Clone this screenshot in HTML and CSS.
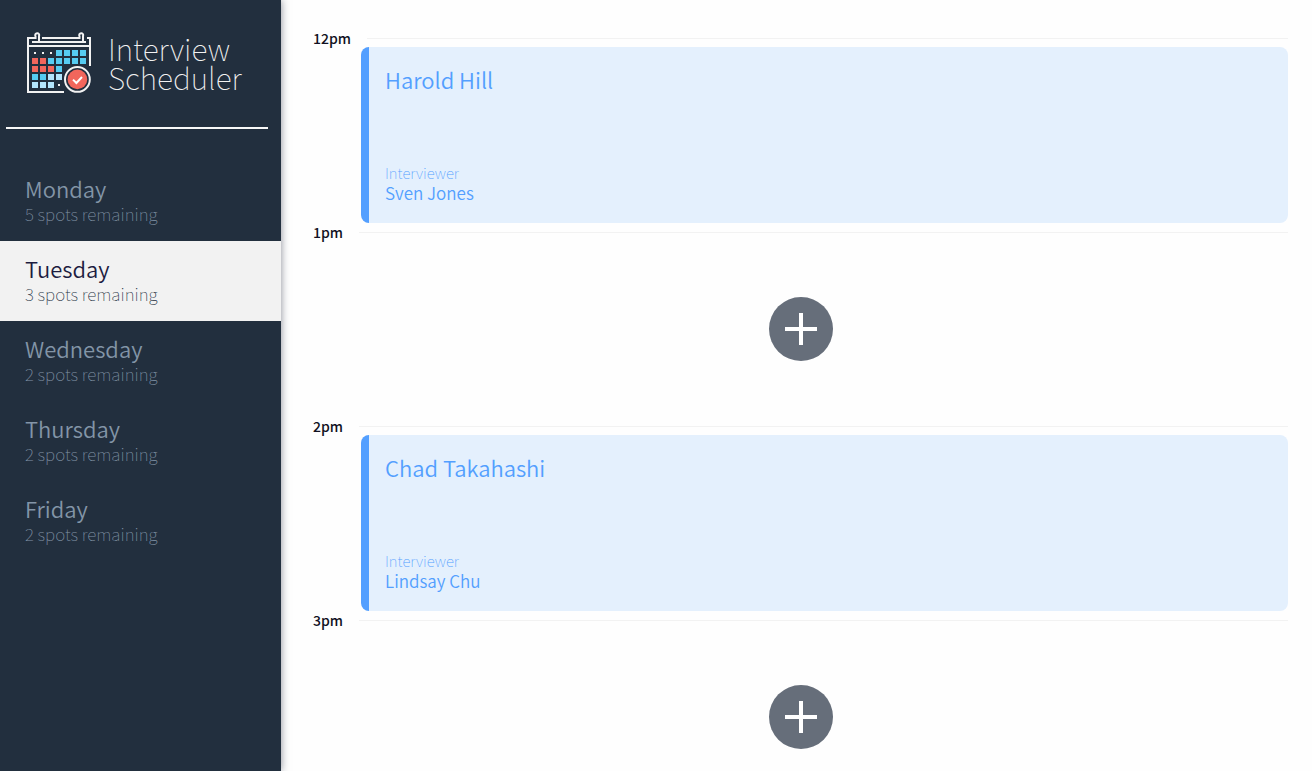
FILE: index.html
```html
<!DOCTYPE html>
<html lang="en">
<head>
<meta charset="utf-8">
<meta name="viewport" content="width=device-width, initial-scale=1">
<title>Interview Scheduler</title>
<link rel="stylesheet" href="styles.css">
</head>
<body>
<div class="layout">
  <aside class="sidebar">
    <header class="brand">
      <svg class="brand-icon" width="66" height="62" viewBox="0 0 66 62" aria-hidden="true">
        <g fill="none" stroke="#f2f2f2" stroke-width="2">
          <path d="M38 60H2V6H10M16 6H53M61 6H64V34M1 14H65M6 10H60"/>
          <path d="M9.500 7V4.200A2 2 0 1 1 13 4V10M53.500 7V4.200A2 2 0 1 1 57 4V10"/>
        </g>
        <path fill="#f2f2f2" d="M8 20h2v2h-2zM16 20h2v2h-2zM24 20h2v2h-2zM32 52h2v2h-2z"/>
        <path fill="#56ccf2" d="M30 18h6v6h-6zM38 18h6v6h-6zM46 18h6v6h-6zM54 18h6v6h-6zM22 26h6v6h-6zM30 26h6v6h-6zM38 26h6v6h-6zM46 26h6v6h-6zM54 26h6v6h-6zM30 34h6v6h-6zM6 42h6v6H6zM14 42h6v6h-6z"/>
        <path fill="#f2665c" d="M6 26h6v6H6zM14 26h6v6h-6zM6 34h6v6H6zM14 34h6v6h-6zM22 34h6v6h-6z"/>
        <path fill="#b3e5fc" d="M22 42h6v6h-6zM30 42h6v6h-6zM6 50h6v6H6zM14 50h6v6h-6zM22 50h6v6h-6z"/>
        <circle cx="51.4" cy="47.4" r="14.6" fill="#222f3e"/>
        <circle cx="51.4" cy="47.4" r="12.4" fill="none" stroke="#f2f2f2" stroke-width="2"/>
        <circle cx="51.4" cy="47.4" r="9.8" fill="#f2665c"/>
        <path d="M47 47.6L50.4 51L56 45" fill="none" stroke="#fff" stroke-width="2"/>
      </svg>
      <h1 class="brand-name">Interview<br>Scheduler</h1>
    </header>
    <hr class="divider">
    <nav aria-label="Days">
      <ul class="days">
        <li><button class="day" type="button"><span class="day-name">Monday</span><span class="day-spots">5 spots remaining</span></button></li>
        <li><button class="day day-selected" type="button" aria-current="true"><span class="day-name">Tuesday</span><span class="day-spots">3 spots remaining</span></button></li>
        <li><button class="day" type="button"><span class="day-name">Wednesday</span><span class="day-spots">2 spots remaining</span></button></li>
        <li><button class="day" type="button"><span class="day-name">Thursday</span><span class="day-spots">2 spots remaining</span></button></li>
        <li><button class="day" type="button"><span class="day-name">Friday</span><span class="day-spots">2 spots remaining</span></button></li>
      </ul>
    </nav>
  </aside>
  <main class="schedule">
    <section class="slot">
      <header class="slot-head"><h2 class="slot-time">12pm</h2></header>
      <article class="booking">
        <h3 class="booking-name">Harold Hill</h3>
        <div><h4 class="booking-label">Interviewer</h4><p class="booking-person">Sven Jones</p></div>
      </article>
    </section>
    <section class="slot">
      <header class="slot-head"><h2 class="slot-time">1pm</h2></header>
      <div class="open">
        <button class="add" type="button" aria-label="Add interview at 1pm"><svg width="32" height="32" viewBox="0 0 32 32" aria-hidden="true"><path d="M16 0V32M0 16H32" stroke="#fff" stroke-width="4"/></svg></button>
      </div>
    </section>
    <section class="slot">
      <header class="slot-head"><h2 class="slot-time">2pm</h2></header>
      <article class="booking">
        <h3 class="booking-name">Chad Takahashi</h3>
        <div><h4 class="booking-label">Interviewer</h4><p class="booking-person">Lindsay Chu</p></div>
      </article>
    </section>
    <section class="slot">
      <header class="slot-head"><h2 class="slot-time">3pm</h2></header>
      <div class="open">
        <button class="add" type="button" aria-label="Add interview at 3pm"><svg width="32" height="32" viewBox="0 0 32 32" aria-hidden="true"><path d="M16 0V32M0 16H32" stroke="#fff" stroke-width="4"/></svg></button>
      </div>
    </section>
  </main>
</div>
</body>
</html>
```

FILE: styles.css
```css
* { box-sizing: border-box; }

body, h1, h2, h3, h4, p, ul { margin: 0; padding: 0; }

body {
  font-family: "Noto Sans CJK SC", "Open Sans", sans-serif;
  background: #fefefe;
  color: #1a1a2e;
}

button { font: inherit; border: 0; cursor: pointer; }

.layout { display: flex; height: 100vh; }

.sidebar {
  flex: 0 0 281px;
  background: #222f3e;
  box-shadow: 0 0 8px rgba(20, 25, 45, 0.5);
}

.brand {
  display: flex;
  align-items: center;
  gap: 16px;
  padding: 32px 26px;
}

.brand-icon { flex: none; }

.brand-name {
  font-size: 30px;
  font-weight: 100;
  line-height: 29px;
  color: #f2f2f2;
}

.divider {
  margin: 1px 13px 32px 6px;
  border: 0;
  height: 2px;
  background: #f8f8f8;
}

.days { list-style: none; }

.day {
  display: flex;
  flex-direction: column;
  justify-content: center;
  width: 100%;
  height: 80px;
  padding: 0 25px 1px;
  background: transparent;
  color: #8395a7;
  text-align: left;
}

.day-selected { background: #f2f2f2; color: #222f3e; }
.day-selected .day-name { color: #1c1c40; }
.day-name { font-size: 22px; font-weight: 350; line-height: 26px; }
.day-spots { font-size: 17px; font-weight: 100; line-height: 26px; }

.schedule {
  flex: 1;
  min-width: 0;
  padding: 29px 24px 0 32px;
  overflow-y: auto;
  scrollbar-width: none;
}

.slot-head {
  display: flex;
  align-items: center;
  gap: 16px;
  height: 18px;
}

.slot-head::after {
  content: "";
  flex: 1;
  height: 1px;
  background: #f2f2f2;
}

.slot-time {
  font-size: 14px;
  font-weight: 500;
  line-height: 18px;
  color: #111122;
}

.booking, .open { height: 176px; margin-left: 48px; }

.booking {
  display: flex;
  flex-direction: column;
  justify-content: space-between;
  padding: 16px 16px 20px;
  border-left: 8px solid #539fff;
  border-radius: 8px;
  background: #e4f0fd;
  color: #539fff;
}

.booking-name { font-size: 22px; font-weight: 350; line-height: 32px; }
.booking-label { font-size: 15px; font-weight: 100; line-height: 20px; }
.booking-person { font-size: 17px; font-weight: 350; line-height: 20px; }

.open {
  display: grid;
  place-items: center;
  margin-right: 48px;
}

.add {
  display: grid;
  place-items: center;
  width: 64px;
  height: 64px;
  padding: 0;
  border-radius: 50%;
  background: #666e7a;
}
```
